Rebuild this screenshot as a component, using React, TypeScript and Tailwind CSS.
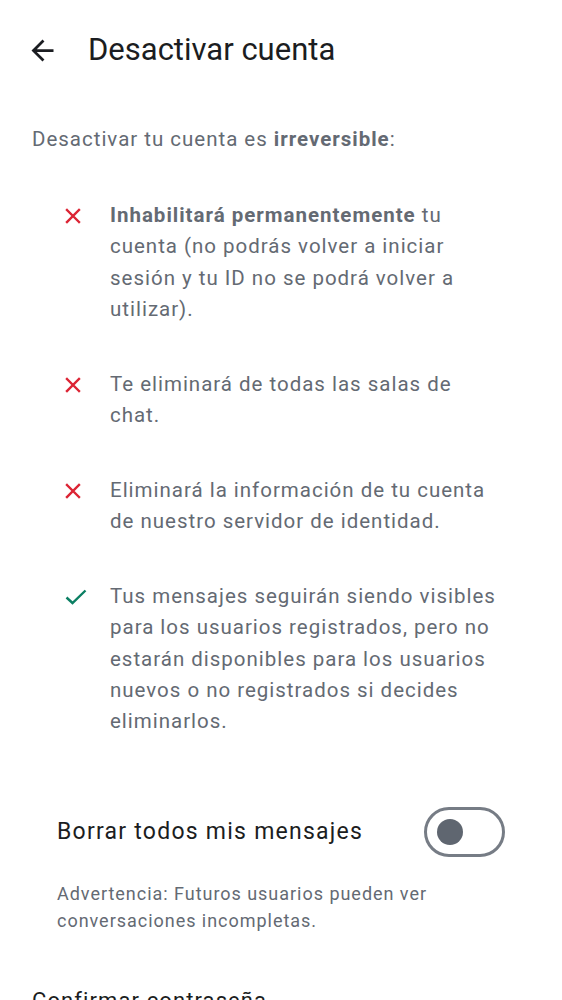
import React from "react";

type Item = { ok: boolean; content: React.ReactNode };

const items: Item[] = [
  {
    ok: false,
    content: (
      <>
        <span className="font-bold">Inhabilitará permanentemente</span> tu cuenta (no podrás volver a iniciar
        sesión y tu ID no se podrá volver a utilizar).
      </>
    ),
  },
  { ok: false, content: <>Te eliminará de todas las salas de chat.</> },
  { ok: false, content: <>Eliminará la información de tu cuenta de nuestro servidor de identidad.</> },
  {
    ok: true,
    content: (
      <>
        Tus mensajes seguirán siendo visibles para los usuarios registrados, pero no estarán disponibles para los
        usuarios nuevos o no registrados si decides eliminarlos.
      </>
    ),
  },
];

function CrossIcon() {
  return (
    <svg width="16" height="16" viewBox="0 0 16 16" className="text-[#dc2434]">
      <path d="M2 2 L14 14 M14 2 L2 14" stroke="currentColor" strokeWidth="2.4" strokeLinecap="square" />
    </svg>
  );
}

function CheckIcon() {
  return (
    <svg width="22" height="16" viewBox="0 0 22 16" className="text-[#0b7f63]">
      <path d="M1.5 8.5 L7.5 14 L20.5 1.5" stroke="currentColor" strokeWidth="2.4" fill="none" />
    </svg>
  );
}

export default function App() {
  return (
    <main className="min-h-screen bg-white font-['Roboto',sans-serif] overflow-hidden">
      {/* Top bar */}
      <header className="h-[100px] flex items-center pl-[26px]">
        <svg width="33" height="33" viewBox="0 0 24 24" className="text-[#1b1d21]">
          <path d="M20 11H7.83l5.59-5.59L12 4l-8 8 8 8 1.41-1.41L7.83 13H20v-2z" fill="currentColor" />
        </svg>
        <h1 className="ml-[29px] text-[31px] leading-none text-[#1b1d21] -mt-[1px]">Desactivar cuenta</h1>
      </header>

      <section className="px-8">
        <p className="mt-[24px] text-[20.5px] leading-[31px] tracking-[0.048em] text-[#646a73]">
          Desactivar tu cuenta es <span className="font-bold">irreversible</span>:
        </p>

        <ul className="mt-[45px] flex flex-col gap-[43.2px]">
          {items.map((it, i) => (
            <li key={i} className="flex">
              <div className="w-[78px] h-[31.4px] flex items-center pl-[33px] shrink-0">
                {it.ok ? <CheckIcon /> : <CrossIcon />}
              </div>
              <p className="w-[394px] text-[20.5px] leading-[31.4px] tracking-[0.048em] text-[#646a73]">
                {it.content}
              </p>
            </li>
          ))}
        </ul>

        <div className="mt-[69px] ml-[25px] mr-[25px] flex items-center justify-between">
          <span className="text-[23px] tracking-[0.054em] text-[#1b1d21]">Borrar todos mis mensajes</span>
          <div className="w-[81px] h-[50px] rounded-full border-[3px] border-[#767c85] flex items-center pl-[10px]">
            <div className="w-[26px] h-[26px] rounded-full bg-[#5f6670]" />
          </div>
        </div>

        <p className="mt-[23px] ml-[25px] text-[18px] leading-[27px] tracking-[0.054em] text-[#646a73]">
          Advertencia: Futuros usuarios pueden ver
          <br />
          conversaciones incompletas.
        </p>

        <p className="mt-[52px] text-[22px] leading-[30px] tracking-[0.05em] text-[#1b1d21]">Confirmar contraseña</p>
      </section>
    </main>
  );
}
